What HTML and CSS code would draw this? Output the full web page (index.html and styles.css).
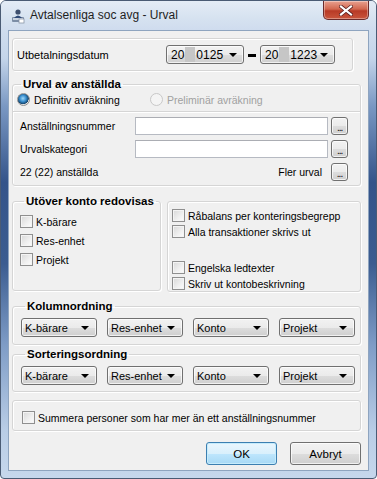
FILE: index.html
```html
<!DOCTYPE html>
<html lang="sv">
<head>
  <meta charset="UTF-8" />
  <title>Avtalsenliga soc avg - Urval</title>
  <link rel="stylesheet" href="styles.css">
</head>
<body>
  <div class="window">
    <div class="titlebar">
      <svg class="app-icon" width="16" height="16" viewBox="0 0 16 16">
        <rect x="2" y="9" width="12" height="5" rx="1" fill="#7d8ea6"/>
        <rect x="3" y="10" width="10" height="2" fill="#c9d3e0"/>
        <circle cx="8" cy="4" r="2.6" fill="#3d4f6e"/>
        <path d="M4 10 Q8 5 12 10 Z" fill="#2f4a78"/>
        <rect x="9" y="11" width="5" height="4" fill="#ffffff" stroke="#8a96a8" stroke-width="0.8"/>
      </svg>
      <span class="title-text">Avtalsenliga soc avg - Urval</span>
      <div class="close-btn">
        <svg width="14" height="11" viewBox="0 0 14 11">
          <path d="M2 1.5 L12 9.5 M12 1.5 L2 9.5" stroke="#5a1e1e" stroke-width="3.6" stroke-linecap="square"/>
          <path d="M2 1.5 L12 9.5 M12 1.5 L2 9.5" stroke="#ffffff" stroke-width="2.2" stroke-linecap="square"/>
        </svg>
      </div>
    </div>

    <div class="client">
      <div class="panel date-panel">
        <span class="date-label">Utbetalningsdatum</span>
        <div class="combo date-combo"><span>20<i class="redact"></i>0125</span><b class="arrow"></b></div>
        <span class="dash"></span>
        <div class="combo date-combo short"><span>20<i class="redact"></i>1223</span><b class="arrow"></b></div>
      </div>

      <fieldset class="group urval">
        <legend>Urval av anställda</legend>
        <div class="radio-row">
          <span class="opt"><span class="radio checked"></span>Definitiv avräkning</span>
          <span class="opt disabled"><span class="radio"></span>Preliminär avräkning</span>
        </div>
        <div class="separator"></div>
        <div class="field-row">
          <span class="field-label">Anställningsnummer</span>
          <span class="textbox"></span>
          <span class="dots-btn">...</span>
        </div>
        <div class="field-row">
          <span class="field-label">Urvalskategori</span>
          <span class="textbox"></span>
          <span class="dots-btn">...</span>
        </div>
        <div class="field-row">
          <span class="field-label">22 (22) anställda</span>
          <span class="more-label">Fler urval</span>
          <span class="dots-btn">...</span>
        </div>
      </fieldset>

      <div class="split">
        <fieldset class="group extra">
          <legend>Utöver konto redovisas</legend>
          <div class="check-list">
            <span class="opt"><span class="check"></span>K-bärare</span>
            <span class="opt"><span class="check"></span>Res-enhet</span>
            <span class="opt"><span class="check"></span>Projekt</span>
          </div>
        </fieldset>
        <fieldset class="group options">
          <div class="check-list tight">
            <span class="opt"><span class="check"></span>Råbalans per konteringsbegrepp</span>
            <span class="opt"><span class="check"></span>Alla transaktioner skrivs ut</span>
            <span class="opt spaced"><span class="check"></span>Engelska ledtexter</span>
            <span class="opt"><span class="check"></span>Skriv ut kontobeskrivning</span>
          </div>
        </fieldset>
      </div>

      <fieldset class="group order">
        <legend>Kolumnordning</legend>
        <div class="combo-row">
          <div class="combo"><span>K-bärare</span><b class="arrow"></b></div>
          <div class="combo"><span>Res-enhet</span><b class="arrow"></b></div>
          <div class="combo"><span>Konto</span><b class="arrow"></b></div>
          <div class="combo"><span>Projekt</span><b class="arrow"></b></div>
        </div>
      </fieldset>

      <fieldset class="group order sort">
        <legend>Sorteringsordning</legend>
        <div class="combo-row">
          <div class="combo"><span>K-bärare</span><b class="arrow"></b></div>
          <div class="combo"><span>Res-enhet</span><b class="arrow"></b></div>
          <div class="combo"><span>Konto</span><b class="arrow"></b></div>
          <div class="combo"><span>Projekt</span><b class="arrow"></b></div>
        </div>
      </fieldset>

      <fieldset class="group summary">
        <span class="opt"><span class="check"></span>Summera personer som har mer än ett anställningsnummer</span>
      </fieldset>

      <div class="button-row">
        <span class="button default">OK</span>
        <span class="button">Avbryt</span>
      </div>
    </div>
  </div>
</body>
</html>
```

FILE: styles.css
```css
html, body {
  margin: 0;
  padding: 0;
  background: #ffffff;
}

body {
  font-family: "Liberation Sans", Arial, sans-serif;
  font-size: 10.5px;
  color: #000;
}

/* window frame */
.window {
  width: 377px;
  height: 479px;
  box-sizing: border-box;
  border: 1px solid #4a5b74;
  border-radius: 6px 6px 4px 4px;
  padding: 0 7px 7px 7px;
  display: flex;
  flex-direction: column;
  background: linear-gradient(180deg, #dbe6f3 0%, #c4d5ea 12%, #7a98c3 22%, #34548a 38%, #3b5c90 55%, #7e9cc6 72%, #b9cde6 90%, #c6d7ec 100%);
  overflow: hidden;
}

.titlebar {
  height: 29px;
  margin: 0 -7px;
  padding: 0 7px 0 9px;
  display: flex;
  align-items: flex-start;
  background: linear-gradient(180deg, #e4ecf6 0%, #d6e2f0 60%, #cfdcee 100%);
}

.app-icon {
  margin-top: 7px;
}

.title-text {
  margin-top: 7px;
  margin-left: 4px;
  font-size: 12px;
  color: #1e1e1e;
}

.close-btn {
  margin-left: auto;
  width: 46px;
  height: 19px;
  box-sizing: border-box;
  border: 1px solid #6b2b2b;
  border-top: none;
  border-radius: 0 0 5px 5px;
  background: linear-gradient(180deg, #e8a190 0%, #d2674f 45%, #b83a26 55%, #c9553c 100%);
  display: flex;
  align-items: center;
  justify-content: center;
  box-shadow: inset 0 0 0 1px rgba(255, 255, 255, 0.35);
}

.client {
  flex: 1;
  background: #f0f0f0;
  border: 1px solid #8ea4bf;
  padding: 7px 7px 0 3px;
  display: flex;
  flex-direction: column;
}

/* group boxes */
.panel, .group {
  border: 1px solid #d5d5d5;
  border-radius: 3px;
  box-shadow: inset 1px 1px 0 #ffffff, 1px 1px 0 #ffffff;
}

.group {
  margin: 0;
  min-width: 0;
  padding: 0 0 0 4px;
}

.group legend {
  font-weight: bold;
  font-size: 11.5px;
  line-height: 14px;
  padding: 0 2px;
  margin-left: 4px;
  white-space: nowrap;
}

.date-panel {
  margin-right: 8px;
  height: 33px;
  box-sizing: border-box;
  display: flex;
  align-items: center;
  padding-left: 4px;
}

.date-label {
  width: 149px;
  font-size: 11px;
}

.dash {
  width: 8px;
  height: 3px;
  background: #000;
  margin: 2px 4px 0 4px;
}

/* combos */
.combo {
  height: 19px;
  box-sizing: border-box;
  border: 1px solid #707070;
  border-radius: 3px;
  background: linear-gradient(180deg, #f2f2f2 0%, #ebebeb 50%, #dddddd 51%, #cfcfcf 100%);
  display: flex;
  align-items: center;
  padding: 0 6px 0 4px;
  box-shadow: inset 0 0 0 1px rgba(255, 255, 255, 0.7);
  font-size: 11px;
}

.combo span {
  flex: 1;
  white-space: nowrap;
}

.arrow {
  width: 0;
  height: 0;
  border-left: 4px solid transparent;
  border-right: 4px solid transparent;
  border-top: 4px solid #000;
}

.date-combo {
  width: 78px;
  font-size: 12px;
}

.date-combo.short {
  width: 75px;
}

.redact {
  display: inline-block;
  width: 10px;
  height: 15px;
  margin: 0 1px;
  background: #c6c6c6;
  vertical-align: -3px;
}

/* urval */
.urval {
  margin-top: 6px;
  padding-bottom: 4px;
}

.radio-row {
  display: flex;
  height: 17px;
  align-items: center;
}

.radio-row .opt:first-child {
  width: 133px;
}

.opt {
  display: flex;
  align-items: center;
  white-space: nowrap;
}

.opt.disabled {
  color: #a0a0a0;
}

.radio {
  width: 13px;
  height: 13px;
  box-sizing: border-box;
  border-radius: 50%;
  border: 1px solid #8f8f8f;
  background: radial-gradient(circle at 40% 40%, #ffffff 0%, #e4e4e4 100%);
  margin-right: 4px;
}

.radio.checked {
  background: radial-gradient(circle at 45% 40%, #9fd8f7 0%, #3a8fcf 35%, #14466f 62%, #dcdcdc 66%, #f4f4f4 100%);
}

.opt.disabled .radio {
  border-color: #c8c8c8;
  background: #f4f4f4;
}

.separator {
  height: 1px;
  background: #d5d5d5;
  border-bottom: 1px solid #ffffff;
  margin: 3px 0 4px -4px;
}

.field-row {
  display: flex;
  align-items: center;
  height: 18px;
  margin-bottom: 5px;
  padding-left: 3px;
}

.field-row:last-child {
  margin-bottom: 0;
}

.field-label {
  width: 116px;
}

.textbox {
  width: 194px;
  height: 18px;
  box-sizing: border-box;
  background: #ffffff;
  border: 1px solid #b6bac2;
  border-top-color: #abadb3;
}

.more-label {
  margin-left: auto;
  margin-right: 6px;
}

.dots-btn {
  width: 17px;
  height: 18px;
  box-sizing: border-box;
  margin-left: 3px;
  margin-right: 12px;
  border: 1px solid #707070;
  border-radius: 3px;
  background: linear-gradient(180deg, #f2f2f2 0%, #ebebeb 50%, #dddddd 51%, #cfcfcf 100%);
  box-shadow: inset 0 0 0 1px rgba(255, 255, 255, 0.7);
  font-size: 10px;
  line-height: 20px;
  text-align: center;
  letter-spacing: -1px;
}

/* checkboxes */
.check {
  width: 13px;
  height: 13px;
  box-sizing: border-box;
  border: 1px solid #8f8f8f;
  background: linear-gradient(135deg, #d8d8d8 0%, #f0f0f0 60%, #fdfdfd 100%);
  box-shadow: inset 0 0 0 1px #f4f4f4;
  margin-right: 3px;
}

.check-list {
  display: flex;
  flex-direction: column;
  gap: 6px;
}

.check-list.tight {
  gap: 3px;
}

.split {
  display: flex;
  align-items: flex-start;
  gap: 6px;
  margin-top: 8px;
}

.extra {
  width: 149px;
  box-sizing: border-box;
  padding: 7px 0 24px 7px;
}

.options {
  flex: 1;
  box-sizing: border-box;
  margin-top: 7px;
  padding: 7px 0 1px 4px;
}

.options .opt.spaced {
  margin-top: 20px;
}

/* ordering */
.order {
  margin-top: 7px;
  padding: 5px 0 7px 8px;
}

.order.sort {
  margin-top: 2px;
  padding-bottom: 6px;
}

.combo-row {
  display: flex;
  gap: 10px;
}

.combo-row .combo {
  width: 76px;
  padding-left: 3px;
  padding-right: 7px;
}

.summary {
  margin-top: 8px;
  box-sizing: border-box;
  padding: 10px 0 6px 9px;
}

.button-row {
  display: flex;
  justify-content: flex-end;
  gap: 13px;
  margin-top: 11px;
}

.button {
  width: 71px;
  height: 23px;
  box-sizing: border-box;
  border: 1px solid #707070;
  border-radius: 3px;
  background: linear-gradient(180deg, #f2f2f2 0%, #ebebeb 50%, #dddddd 51%, #cfcfcf 100%);
  box-shadow: inset 0 0 0 1px rgba(255, 255, 255, 0.7);
  display: flex;
  align-items: center;
  justify-content: center;
  font-size: 11.5px;
}

.button.default {
  border-color: #3c7fb1;
  background: linear-gradient(180deg, #eaf6fd 0%, #d9f0fc 50%, #bee6fd 51%, #a7d9f5 100%);
  box-shadow: inset 0 0 0 1px #c6ecfc;
}
```
